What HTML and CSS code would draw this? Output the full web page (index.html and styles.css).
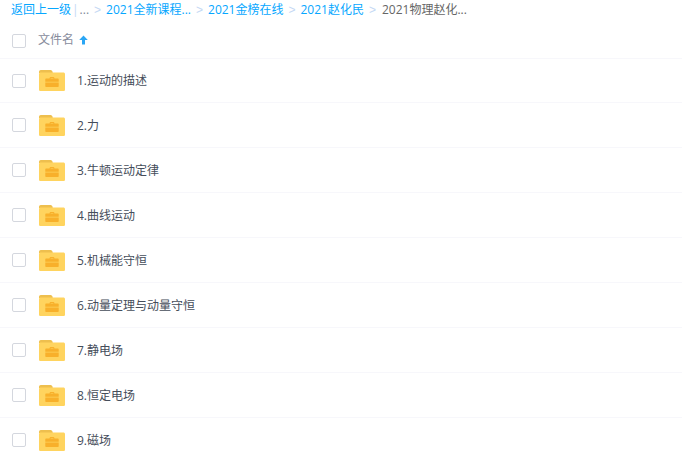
FILE: index.html
```
<!DOCTYPE html>
<html lang="zh">
<head>
<meta charset="utf-8">
<title>文件列表</title>
<link rel="stylesheet" href="styles.css">
</head>
<body>
<svg class="defs" width="0" height="0" aria-hidden="true">
  <symbol id="folder" viewBox="0 0 26 21">
    <path d="M0 2C0 .8.7 0 1.800 0h9.700c1.200 0 2 .8 2.300 3H0z" fill="#eebf4e"/>
    <path d="M0 4c0-.9.700-1.600 1.600-1.600h22.800c.9 0 1.600.7 1.600 1.600v15.400c0 .9-.7 1.600-1.600 1.600H1.600C.7 21 0 20.300 0 19.400z" fill="#ffd45f"/>
    <path d="M10.500 8.600c0-1 .6-1.500 1.500-1.500h2c.9 0 1.500.5 1.500 1.500h3.500c.4 0 .7.300.7.700v2.500H7.300 6.300V9.300c0-.4.300-.7.700-.7zM11.600 8.600h2.800c0-.4-.2-.5-.5-.5h-1.800c-.3 0-.5.100-.5.500zM6.300 12.600h13.400v3.700c0 .4-.3.700-.7.700H7c-.4 0-.7-.3-.7-.7z" fill="#f8b02b" fill-rule="evenodd"/>
  </symbol>
</svg>
<nav class="crumbs">
  <a>返回上一级</a><span class="bar">|</span><span class="dots">...</span><span class="sep">&gt;</span><a>2021全新课程...</a><span class="sep">&gt;</span><a>2021金榜在线</a><span class="sep">&gt;</span><a>2021赵化民</a><span class="sep">&gt;</span><span class="cur">2021物理赵化...</span>
</nav>
<div class="head">
  <span class="check"></span>
  <span class="head-name">文件名</span>
  <svg class="arrow" width="9" height="10" viewBox="0 0 9 10"><path d="M4.500.5L8.800 5H6V9.500H3V5H.2z" fill="#2aa6f5"/></svg>
</div>
<ul class="list">
  <li class="row"><span class="check"></span><svg class="folder"><use href="#folder"/></svg><span class="name">1.运动的描述</span></li>
  <li class="row"><span class="check"></span><svg class="folder"><use href="#folder"/></svg><span class="name">2.力</span></li>
  <li class="row"><span class="check"></span><svg class="folder"><use href="#folder"/></svg><span class="name">3.牛顿运动定律</span></li>
  <li class="row"><span class="check"></span><svg class="folder"><use href="#folder"/></svg><span class="name">4.曲线运动</span></li>
  <li class="row"><span class="check"></span><svg class="folder"><use href="#folder"/></svg><span class="name">5.机械能守恒</span></li>
  <li class="row"><span class="check"></span><svg class="folder"><use href="#folder"/></svg><span class="name">6.动量定理与动量守恒</span></li>
  <li class="row"><span class="check"></span><svg class="folder"><use href="#folder"/></svg><span class="name">7.静电场</span></li>
  <li class="row"><span class="check"></span><svg class="folder"><use href="#folder"/></svg><span class="name">8.恒定电场</span></li>
  <li class="row"><span class="check"></span><svg class="folder"><use href="#folder"/></svg><span class="name">9.磁场</span></li>
</ul>
</body>
</html>
```
FILE: styles.css
```
html, body {
  margin: 0;
  padding: 0;
  height: 458px;
  overflow: hidden;
  background: #fff;
  font-family: "Open Sans", "Noto Sans CJK SC", sans-serif;
  font-size: 12px;
  line-height: 16px;
}
.defs { position: absolute; }
.crumbs {
  display: flex;
  align-items: center;
  height: 20px;
  margin-bottom: 4px;
  padding-left: 11px;
  color: #06a7ff;
  white-space: nowrap;
}
.crumbs a { color: #06a7ff; }
.bar { color: #c4d8f4; margin: 0 1px; }
.dots { color: #818999; }
.sep { color: #c4d8f4; margin: 0 5px; font-family: "Liberation Sans", sans-serif; }
.cur { color: #666; margin-left: 1px; }
.head {
  display: flex;
  align-items: center;
  height: 35px;
  padding-left: 12px;
  border-bottom: 1px solid #f7f7fb;
  box-sizing: border-box;
}
.check {
  flex: none;
  width: 12px;
  height: 12px;
  border: 1px solid #d4d7de;
  border-radius: 2px;
}
.head-name { margin: 0 0 2px 12px; color: #878c9c; }
.arrow { margin: 0 0 2px 5px; }
.list { list-style: none; margin: 0; padding: 0; }
.row {
  display: flex;
  align-items: center;
  height: 45px;
  padding-left: 12px;
  border-bottom: 1px solid #f7f7fb;
  box-sizing: border-box;
}
.row:first-child { height: 44px; }
.folder { flex: none; width: 26px; height: 21px; margin-left: 13px; }
.name { margin-left: 12px; color: #454d5a; }
.row + .row .name { padding-top: 2px; }
```
